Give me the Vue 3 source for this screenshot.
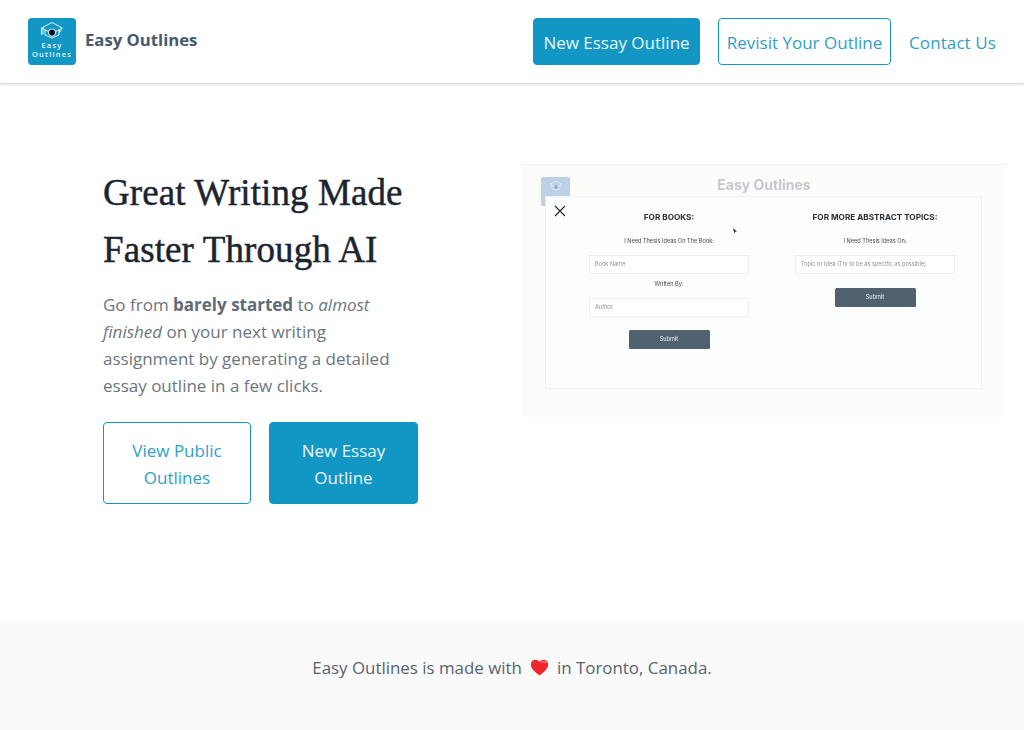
<script setup>
</script>

<template>
  <div class="page">
    <header class="top">
      <div class="brand">
        <div class="logo">
          <svg class="cap" width="24" height="18" viewBox="0 0 24 18" fill="none" stroke="#dff2f8" stroke-width="1" stroke-linejoin="round">
            <path d="M1.500 7 12 1.500 22.500 7 12 12.500z" />
            <path d="M5 8.500v5.500l7 3 7-3V8.500" />
            <path d="M1.500 7v7M3 6.500v7" />
            <path d="M19.500 8v3.500l2-3" />
            <circle cx="12" cy="11.500" r="4" fill="#bfe3f0" stroke="none" />
            <circle cx="12" cy="11.500" r="2.900" fill="#05090c" stroke="none" />
          </svg>
          <span class="logo-a">Easy</span>
          <span class="logo-b">Outlines</span>
        </div>
        <span class="brand-name">Easy Outlines</span>
      </div>
      <nav class="nav">
        <a class="btn solid wa">New Essay Outline</a>
        <a class="btn line wb">Revisit Your Outline</a>
        <a class="link">Contact Us</a>
      </nav>
    </header>

    <main class="hero">
      <section class="copy">
        <h1>Great Writing Made<br />Faster Through AI</h1>
        <p>Go from <b>barely started</b> to <i>almost</i> <i>finished</i> on your next writing assignment by generating a detailed essay outline in a few clicks.</p>
        <div class="cta">
          <a class="btn line big">View Public Outlines</a>
          <a class="btn solid big">New Essay Outline</a>
        </div>
      </section>

      <section class="shot">
        <div class="shot-head">
          <div class="shot-logo">
            <svg width="14" height="11" viewBox="0 0 24 18" fill="none" stroke="#e6eef7" stroke-width="1.400" stroke-linejoin="round">
              <path d="M1.500 7 12 1.500 22.500 7 12 12.500z" />
              <path d="M5 8.500v5.500l7 3 7-3V8.500" />
              <circle cx="12" cy="11.500" r="3" fill="#8fa6c4" stroke="none" />
            </svg>
          </div>
          <span class="shot-title">Easy Outlines</span>
        </div>
        <div class="modal">
          <svg class="close" width="12" height="12" viewBox="0 0 12 12" stroke="#222" stroke-width="1.100">
            <path d="M1 1l10 10M11 1 1 11" />
          </svg>
          <div class="col">
            <h4>FOR BOOKS:</h4>
            <span class="lab first">I Need Thesis Ideas On The Book:</span>
            <div class="field">Book Name</div>
            <span class="lab second">Written By:</span>
            <div class="field"><i>Author</i></div>
            <div class="sub">Submit</div>
          </div>
          <div class="col">
            <h4>FOR MORE ABSTRACT TOPICS:</h4>
            <span class="lab first">I Need Thesis Ideas On:</span>
            <div class="field">Topic or Idea (Try to be as specific as possible)</div>
            <div class="sub near">Submit</div>
          </div>
          <svg class="cursor" width="4" height="6" viewBox="0 0 4 6"><path d="M0 0l4 3.500-2 .3L1.500 6z" fill="#333" /></svg>
        </div>
      </section>
    </main>

    <footer class="foot">
      <span>Easy Outlines is made with</span>
      <svg class="heart" width="19" height="17" viewBox="0 0 20 18">
        <path d="M10 17.500C7 15 .8 11 .8 5.800.8 2.800 3 .8 5.600 .8 7.400 .8 9 1.700 10 3.300 11 1.700 12.600 .8 14.400 .8 17 .8 19.200 2.800 19.200 5.800 19.200 11 13 15 10 17.500z" fill="#f0262e" />
        <path d="M12.500 3.200c1.500-.9 3.300-.7 4.300.5" stroke="#ff8d8d" stroke-width="1.300" fill="none" stroke-linecap="round" />
      </svg>
      <span>in Toronto, Canada.</span>
    </footer>
  </div>
</template>

<style>
html, body { margin: 0; background: #fff; }
</style>

<style scoped>
.page {
  height: 730px;
  overflow: hidden;
  display: flex;
  flex-direction: column;
  font-family: "Open Sans", "Noto Sans", sans-serif;
  color: #4a5a68;
}
.top {
  height: 83px;
  flex: none;
  box-sizing: border-box;
  padding: 18px 28px 0;
  display: flex;
  justify-content: space-between;
  align-items: flex-start;
  box-shadow: 0 1px 3px rgba(0, 0, 0, .22);
}
.brand { display: flex; align-items: flex-start; gap: 9px; }
.logo {
  width: 48px;
  height: 47px;
  background: #1297c4;
  border-radius: 4px;
  display: flex;
  flex-direction: column;
  align-items: center;
  color: #e8f6fb;
  font-weight: 600;
  line-height: 8px;
  letter-spacing: 1.200px;
}
.cap { margin-top: 3px; flex: none; }
.logo-a { font-size: 7.500px; margin-top: 2px; }
.logo-b { font-size: 7.500px; margin-top: 1px; }
.brand-name {
  font-size: 16.700px;
  font-weight: 700;
  color: #47596a;
  line-height: 44px;
}
.nav { display: flex; align-items: flex-start; gap: 18px; }
.btn {
  box-sizing: border-box;
  border-radius: 4px;
  font-size: 17px;
  line-height: 27px;
  text-align: center;
  display: block;
}
.nav .btn { height: 47px; padding: 10px 0; white-space: nowrap; }
.wa { width: 167px; }
.wb { width: 173px; }
.solid { background: #1297c4; border: 1px solid #1297c4; color: #e9f6fb; }
.line { background: #fff; border: 1px solid #1297c4; color: #2f9fc8; }
.link { color: #2f9fc8; font-size: 17px; line-height: 27px; margin-top: 11px; letter-spacing: .1px; }
.hero {
  flex: 1;
  display: flex;
  padding-left: 103px;
  box-sizing: border-box;
}
.copy { width: 322px; flex: none; padding-top: 81px; }
h1 {
  margin: 0;
  font-family: "Liberation Serif", serif;
  font-size: 37px;
  letter-spacing: .1px;
  line-height: 57px;
  font-weight: 400;
  -webkit-text-stroke: .45px #1a2530;
  color: #1a2530;
}
.copy p {
  margin: 13px 0 0;
  max-width: 300px;
  font-size: 17px;
  line-height: 27px;
  color: #6b7680;
}
.copy p b { font-weight: 700; color: #5f6b76; }
.cta { display: flex; gap: 18px; margin-top: 23px; }
.big { width: 149px; height: 82px; padding: 14px 12px; }
.big.line { width: 148px; }
.shot {
  margin: 81px 0 0 96px;
  width: 485px;
  height: 253px;
  flex: none;
  box-sizing: border-box;
  background: #fcfcfb;
  border-top: 1px solid #f2f2ee;
  font-family: Inter, "Liberation Sans", sans-serif;
  display: flex;
  flex-direction: column;
  position: relative;
  filter: blur(.3px);
}
.shot-head {
  height: 31px;
  flex: none;
  display: flex;
  justify-content: center;
  align-items: center;
  padding: 0 0 4px 0;
  box-sizing: border-box;
}
.shot-logo {
  position: absolute;
  left: 20px;
  top: 12px;
  width: 29px;
  height: 29px;
  background: #bcd0e8;
  border-radius: 2px;
  display: flex;
  justify-content: center;
  align-items: flex-start;
  padding-top: 3px;
  box-sizing: border-box;
}
.shot-title {
  font-size: 14px;
  font-weight: 700;
  color: #c5c9cf;
  margin-left: 1px;
  margin-top: 11px;
}
.modal {
  position: relative;
  margin: 0 24px;
  height: 193px;
  box-sizing: border-box;
  background: #fcfdfd;
  border: 1px solid #f0f1f5;
  display: grid;
  grid-template-columns: 1fr 1fr;
  padding: 0 26px 0 43px;
  column-gap: 46px;
}
.close { position: absolute; left: 8px; top: 8px; }
.cursor { position: absolute; left: 187px; top: 31px; }
.col {
  display: flex;
  flex-direction: column;
  align-items: center;
}
.col h4 {
  margin: 14px 0 0;
  font-size: 8.200px;
  line-height: 12px;
  font-weight: 700;
  color: #2a2f33;
  white-space: nowrap;
}
.lab { font-size: 5.600px; line-height: 8px; color: #44484c; white-space: nowrap; }
.first { margin-top: 14px; }
.second { margin-top: 6px; }
.field {
  align-self: stretch;
  box-sizing: border-box;
  height: 19px;
  margin-top: 10px;
  padding-left: 5px;
  background: #fff;
  border: 1px solid #eef0f2;
  font-size: 5.600px;
  line-height: 17px;
  color: #8b9196;
  white-space: nowrap;
  text-align: left;
}
.second + .field { margin-top: 10px; }
.sub {
  width: 81px;
  height: 19px;
  margin-top: 13px;
  background: #50616f;
  border-radius: 1.500px;
  color: #eef1f3;
  font-size: 5.600px;
  line-height: 19px;
  text-align: center;
}
.sub.near { margin-top: 14px; }
.foot {
  height: 109px;
  flex: none;
  box-sizing: border-box;
  background: #fafafa;
  padding-top: 33px;
  display: flex;
  justify-content: center;
  align-items: flex-start;
  gap: 8px;
  font-size: 16.900px;
  line-height: 27px;
  color: #58646f;
}
.heart { margin-top: 5px; }
</style>
